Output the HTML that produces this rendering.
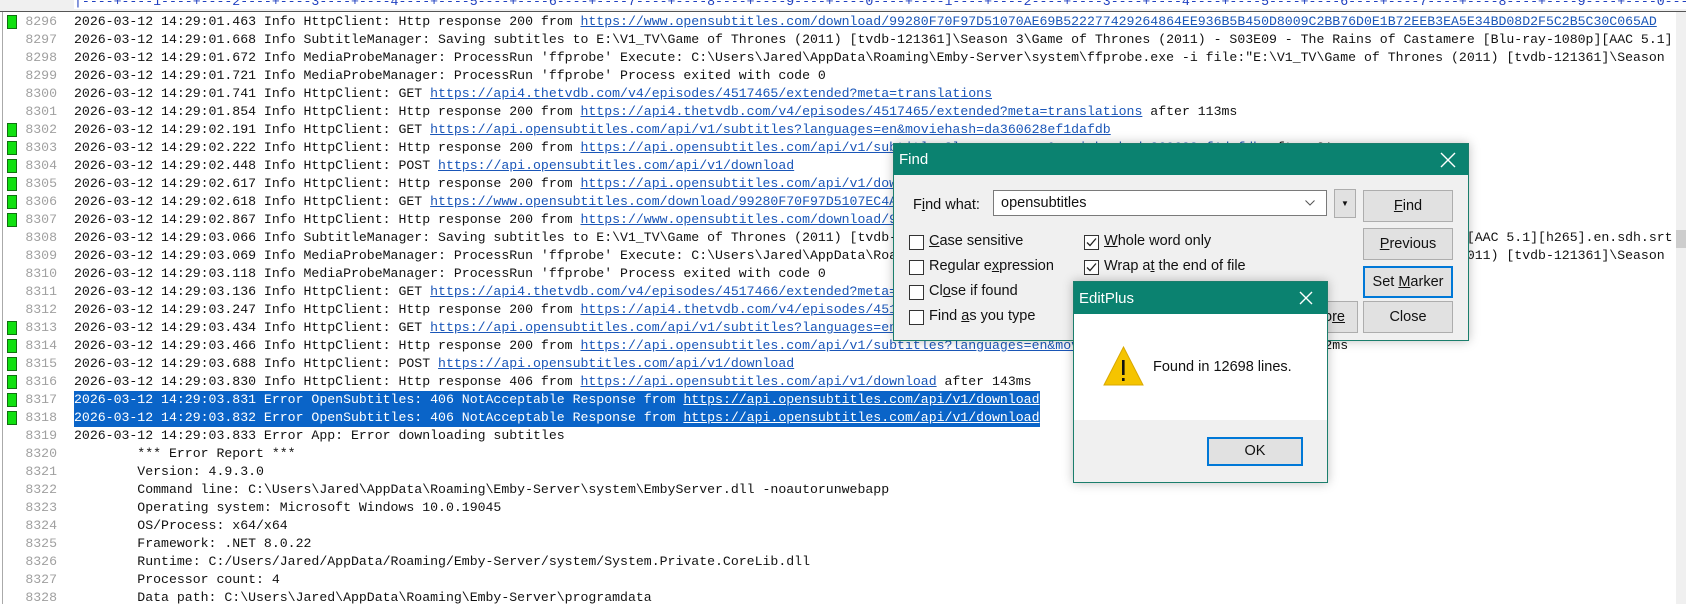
<!DOCTYPE html>
<html><head><meta charset="utf-8"><style>
body{margin:0;width:1686px;height:604px;overflow:hidden;background:#fff;position:relative;font-family:"Liberation Mono",monospace;}
.ruler{position:absolute;left:0;top:0;width:1686px;height:11px;background:#f0f0f0;border-bottom:1px solid #555;overflow:hidden}
.ruler span{position:absolute;left:74px;top:-5px;font-size:13.2px;color:#2040c0;white-space:pre;line-height:14px;background:#fff;padding-right:20px}
.lb{position:absolute;left:2px;top:12px;width:1px;height:592px;background:#aaa}
.r{position:absolute;left:0;height:18px;width:1676px;white-space:pre;font-size:13.2px;line-height:18px;overflow:hidden}
.n{position:absolute;left:16px;width:41px;text-align:right;color:#a0a0a0}
.t{position:absolute;left:74px;color:#111}
.m{position:absolute;left:7px;top:2px;width:8px;height:12px;background:#10e010;border:1px solid #107010}
a{color:#1a56b8;text-decoration:underline}
.sel{background:#0a64c8;color:#fff}
.sel a{color:#fff}
.sb{position:absolute;left:1676px;top:12px;width:10px;height:592px;background:#f0f0f0}
.sb i{position:absolute;left:0;top:218px;width:10px;height:18px;background:#cdcdcd}
.dlg{position:absolute;background:#f0f0f0;border:1px solid #1b7e6c;box-shadow:0 0 10px rgba(0,0,0,.25);font-family:"Liberation Sans",sans-serif;font-size:14.5px;color:#111}
.tb{position:absolute;left:0;top:0;right:0;background:#0b8270;color:#fff}
.btn{position:absolute;background:#e1e1e1;border:1px solid #adadad;text-align:center;box-sizing:border-box;white-space:nowrap;overflow:hidden}
.cb{position:absolute;width:15px;height:15px;border:1px solid #333;background:#fff;box-sizing:border-box}
.lbl{position:absolute;white-space:pre}
</style></head><body>
<div class="ruler"><span>|----+----1----+----2----+----3----+----4----+----5----+----6----+----7----+----8----+----9----+----0----+----1----+----2----+----3----+----4----+----5----+----6----+----7----+----8----+----9----+----0----+----1----+----2</span></div>
<div class="lb"></div>
<div class="r" style="top:13px"><i class="m"></i><span class="n">8296</span><span class="t">2026-03-12 14:29:01.463 Info HttpClient: Http response 200 from <a>https://www.opensubtitles.com/download/99280F70F97D51070AE69B522277429264864EE936B5B450D8009C2BB76D0E1B72EEB3EA5E34BD08D2F5C2B5C30C065AD</a></span></div>
<div class="r" style="top:31px"><span class="n">8297</span><span class="t">2026-03-12 14:29:01.668 Info SubtitleManager: Saving subtitles to E:\V1_TV\Game of Thrones (2011) [tvdb-121361]\Season 3\Game of Thrones (2011) - S03E09 - The Rains of Castamere [Blu-ray-1080p][AAC 5.1]</span></div>
<div class="r" style="top:49px"><span class="n">8298</span><span class="t">2026-03-12 14:29:01.672 Info MediaProbeManager: ProcessRun 'ffprobe' Execute: C:\Users\Jared\AppData\Roaming\Emby-Server\system\ffprobe.exe -i file:"E:\V1_TV\Game of Thrones (2011) [tvdb-121361]\Season</span></div>
<div class="r" style="top:67px"><span class="n">8299</span><span class="t">2026-03-12 14:29:01.721 Info MediaProbeManager: ProcessRun 'ffprobe' Process exited with code 0</span></div>
<div class="r" style="top:85px"><span class="n">8300</span><span class="t">2026-03-12 14:29:01.741 Info HttpClient: GET <a>https://api4.thetvdb.com/v4/episodes/4517465/extended?meta=translations</a></span></div>
<div class="r" style="top:103px"><span class="n">8301</span><span class="t">2026-03-12 14:29:01.854 Info HttpClient: Http response 200 from <a>https://api4.thetvdb.com/v4/episodes/4517465/extended?meta=translations</a> after 113ms</span></div>
<div class="r" style="top:121px"><i class="m"></i><span class="n">8302</span><span class="t">2026-03-12 14:29:02.191 Info HttpClient: GET <a>https://api.opensubtitles.com/api/v1/subtitles?languages=en&amp;moviehash=da360628ef1dafdb</a></span></div>
<div class="r" style="top:139px"><i class="m"></i><span class="n">8303</span><span class="t">2026-03-12 14:29:02.222 Info HttpClient: Http response 200 from <a>https://api.opensubtitles.com/api/v1/subtitles?languages=en&amp;moviehash=da360628ef1dafdb</a> after 31ms</span></div>
<div class="r" style="top:157px"><i class="m"></i><span class="n">8304</span><span class="t">2026-03-12 14:29:02.448 Info HttpClient: POST <a>https://api.opensubtitles.com/api/v1/download</a></span></div>
<div class="r" style="top:175px"><i class="m"></i><span class="n">8305</span><span class="t">2026-03-12 14:29:02.617 Info HttpClient: Http response 200 from <a>https://api.opensubtitles.com/api/v1/download</a> after 169ms</span></div>
<div class="r" style="top:193px"><i class="m"></i><span class="n">8306</span><span class="t">2026-03-12 14:29:02.618 Info HttpClient: GET <a>https://www.opensubtitles.com/download/99280F70F97D5107EC4A1B7E2C8D0F33A6B5E2D91C47F0A28E6B3D5B38FD5562A7F37991B2B94F7</a></span></div>
<div class="r" style="top:211px"><i class="m"></i><span class="n">8307</span><span class="t">2026-03-12 14:29:02.867 Info HttpClient: Http response 200 from <a>https://www.opensubtitles.com/download/99280F70F97D5107EC4A1B7E2C8D0F33A6B5E2546E749C93C99BDB4BFD5B38FD</a></span></div>
<div class="r" style="top:229px"><span class="n">8308</span><span class="t">2026-03-12 14:29:03.066 Info SubtitleManager: Saving subtitles to E:\V1_TV\Game of Thrones (2011) [tvdb-121361]\Season 3\Game of Thrones (2011) - S03E10 - Mhysa [Blu-ray-1080p][AAC 5.1][h265].en.sdh.srt</span></div>
<div class="r" style="top:247px"><span class="n">8309</span><span class="t">2026-03-12 14:29:03.069 Info MediaProbeManager: ProcessRun 'ffprobe' Execute: C:\Users\Jared\AppData\Roaming\Emby-Server\system\ffprobe.exe -i file:"E:\V1_TV\Game of Thrones (2011) [tvdb-121361]\Season</span></div>
<div class="r" style="top:265px"><span class="n">8310</span><span class="t">2026-03-12 14:29:03.118 Info MediaProbeManager: ProcessRun 'ffprobe' Process exited with code 0</span></div>
<div class="r" style="top:283px"><span class="n">8311</span><span class="t">2026-03-12 14:29:03.136 Info HttpClient: GET <a>https://api4.thetvdb.com/v4/episodes/4517466/extended?meta=translations</a></span></div>
<div class="r" style="top:301px"><span class="n">8312</span><span class="t">2026-03-12 14:29:03.247 Info HttpClient: Http response 200 from <a>https://api4.thetvdb.com/v4/episodes/4517466/extended?meta=translations</a> after 111ms</span></div>
<div class="r" style="top:319px"><i class="m"></i><span class="n">8313</span><span class="t">2026-03-12 14:29:03.434 Info HttpClient: GET <a>https://api.opensubtitles.com/api/v1/subtitles?languages=en&amp;moviehash=da360628ef1dafdb</a></span></div>
<div class="r" style="top:337px"><i class="m"></i><span class="n">8314</span><span class="t">2026-03-12 14:29:03.466 Info HttpClient: Http response 200 from <a>https://api.opensubtitles.com/api/v1/subtitles?languages=en&amp;moviehash=da360628ef1dafdb</a> after 32ms</span></div>
<div class="r" style="top:355px"><i class="m"></i><span class="n">8315</span><span class="t">2026-03-12 14:29:03.688 Info HttpClient: POST <a>https://api.opensubtitles.com/api/v1/download</a></span></div>
<div class="r" style="top:373px"><i class="m"></i><span class="n">8316</span><span class="t">2026-03-12 14:29:03.830 Info HttpClient: Http response 406 from <a>https://api.opensubtitles.com/api/v1/download</a> after 143ms</span></div>
<div class="r" style="top:391px"><i class="m"></i><span class="n">8317</span><span class="t sel">2026-03-12 14:29:03.831 Error OpenSubtitles: 406 NotAcceptable Response from <a>https://api.opensubtitles.com/api/v1/download</a></span></div>
<div class="r" style="top:409px"><i class="m"></i><span class="n">8318</span><span class="t sel">2026-03-12 14:29:03.832 Error OpenSubtitles: 406 NotAcceptable Response from <a>https://api.opensubtitles.com/api/v1/download</a></span></div>
<div class="r" style="top:427px"><span class="n">8319</span><span class="t">2026-03-12 14:29:03.833 Error App: Error downloading subtitles</span></div>
<div class="r" style="top:445px"><span class="n">8320</span><span class="t">        *** Error Report ***</span></div>
<div class="r" style="top:463px"><span class="n">8321</span><span class="t">        Version: 4.9.3.0</span></div>
<div class="r" style="top:481px"><span class="n">8322</span><span class="t">        Command line: C:\Users\Jared\AppData\Roaming\Emby-Server\system\EmbyServer.dll -noautorunwebapp</span></div>
<div class="r" style="top:499px"><span class="n">8323</span><span class="t">        Operating system: Microsoft Windows 10.0.19045</span></div>
<div class="r" style="top:517px"><span class="n">8324</span><span class="t">        OS/Process: x64/x64</span></div>
<div class="r" style="top:535px"><span class="n">8325</span><span class="t">        Framework: .NET 8.0.22</span></div>
<div class="r" style="top:553px"><span class="n">8326</span><span class="t">        Runtime: C:/Users/Jared/AppData/Roaming/Emby-Server/system/System.Private.CoreLib.dll</span></div>
<div class="r" style="top:571px"><span class="n">8327</span><span class="t">        Processor count: 4</span></div>
<div class="r" style="top:589px"><span class="n">8328</span><span class="t">        Data path: C:\Users\Jared\AppData\Roaming\Emby-Server\programdata</span></div>
<div class="sb"><i></i></div>

<div class="dlg" style="left:893px;top:143px;width:574px;height:196px">
 <div class="tb" style="height:31px"><span class="lbl" style="left:5px;top:7px;font-size:15px">Find</span>
  <svg style="position:absolute;left:546px;top:8px" width="16" height="16"><path d="M1 1L15 15M15 1L1 15" stroke="#fff" stroke-width="1.4"/></svg></div>
 <span class="lbl" style="left:19px;top:53px">F<u>i</u>nd what:</span>
 <div style="position:absolute;left:99px;top:46px;width:334px;height:26px;background:#fff;border:1px solid #7a7a7a;box-sizing:border-box"><span class="lbl" style="left:7px;top:4px">opensubtitles</span>
  <svg style="position:absolute;left:311px;top:9px" width="10" height="6"><path d="M0.5 0.5L5 5L9.5 0.5" stroke="#555" fill="none"/></svg></div>
 <div class="btn" style="left:440px;top:45px;width:22px;height:29px;font-size:8px;line-height:27px">▼</div>
 <div class="btn" style="left:469px;top:46px;width:90px;height:32px;line-height:30px"><u>F</u>ind</div>
 <div class="btn" style="left:469px;top:84px;width:90px;height:32px;line-height:30px"><u>P</u>revious</div>
 <div class="btn" style="left:469px;top:122px;width:90px;height:32px;line-height:28px;border:2px solid #0078d7">Set <u>M</u>arker</div>
 <div class="btn" style="left:469px;top:157px;width:90px;height:32px;line-height:30px">Close</div>
 <div class="btn" style="left:366px;top:157px;width:98px;height:32px;line-height:30px;text-align:right;padding-right:12px">Mo<u>re</u></div>
 <div class="cb" style="left:15px;top:91px"></div><span class="lbl" style="left:35px;top:89px"><u>C</u>ase sensitive</span>
 <div class="cb" style="left:15px;top:116px"></div><span class="lbl" style="left:35px;top:114px">Regular e<u>x</u>pression</span>
 <div class="cb" style="left:15px;top:141px"></div><span class="lbl" style="left:35px;top:139px">Cl<u>o</u>se if found</span>
 <div class="cb" style="left:15px;top:166px"></div><span class="lbl" style="left:35px;top:164px">Find <u>a</u>s you type</span>
 <div class="cb" style="left:190px;top:91px"><svg width="13" height="13" style="position:absolute;left:0;top:0"><path d="M2 6.5L5 9.5L11 2.5" stroke="#222" stroke-width="1.3" fill="none"/></svg></div><span class="lbl" style="left:210px;top:89px"><u>W</u>hole word only</span>
 <div class="cb" style="left:190px;top:116px"><svg width="13" height="13" style="position:absolute;left:0;top:0"><path d="M2 6.5L5 9.5L11 2.5" stroke="#222" stroke-width="1.3" fill="none"/></svg></div><span class="lbl" style="left:210px;top:114px">Wrap a<u>t</u> the end of file</span>
</div>

<div class="dlg" style="left:1073px;top:281px;width:253px;height:200px;background:#fff">
 <div class="tb" style="height:32px"><span class="lbl" style="left:5px;top:8px;font-size:15px">EditPlus</span>
  <svg style="position:absolute;left:225px;top:9px" width="14" height="14"><path d="M1 1L13 13M13 1L1 13" stroke="#fff" stroke-width="1.4"/></svg></div>
 <svg style="position:absolute;left:29px;top:64px" width="41" height="40" viewBox="0 0 41 40"><polygon points="20.5,1 40,39 1,39" fill="#f5c400" stroke="#d9a800"/><rect x="19" y="14" width="2.6" height="15" fill="#111"/><rect x="19" y="32" width="2.6" height="3" fill="#111"/></svg>
 <span class="lbl" style="left:79px;top:77px">Found in 12698 lines.</span>
 <div style="position:absolute;left:0;top:138px;width:253px;height:62px;background:#f0f0f0"></div>
 <div class="btn" style="left:133px;top:155px;width:96px;height:29px;line-height:25px;border:2px solid #0078d7">OK</div>
</div>
</body></html>
